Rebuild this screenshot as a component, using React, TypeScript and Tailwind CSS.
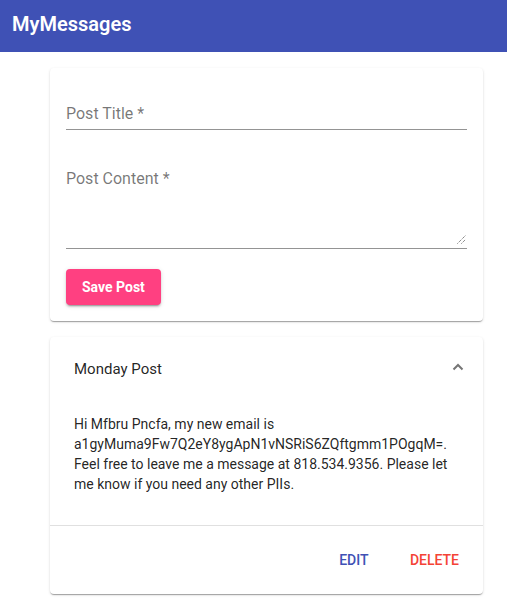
import React from "react";

export default function App() {
  const shadow =
    "shadow-[0_2px_1px_-1px_rgba(0,0,0,0.2),0_1px_1px_0_rgba(0,0,0,0.14),0_1px_3px_0_rgba(0,0,0,0.12)]";
  return (
    <div className="min-h-[602px] bg-white font-['Roboto',sans-serif]">
      <header className="h-[52px] bg-[#3f51b5] flex items-center px-[12px]">
        <span className="text-white text-[20px] font-semibold leading-[24px] mt-[-4px]">MyMessages</span>
      </header>

      <main className="pt-[16px] pb-[8px]">
        <div className={`ml-[50px] w-[433px] bg-white rounded-[4px] ${shadow} px-[16px] pt-[16px] pb-[16px]`}>
          <div className="pt-[21px] pb-[6px] border-b border-[#949494]">
            <div className="text-[16px] leading-[18px] text-[rgba(0,0,0,0.54)]">Post Title *</div>
          </div>
          <div className="mt-[20px] pt-[20px] pb-[60px] border-b border-[#949494] relative">
            <div className="text-[16px] leading-[18px] text-[rgba(0,0,0,0.54)]">Post Content *</div>
            <svg className="absolute right-[1px] bottom-[4px]" width="9" height="9" viewBox="0 0 9 9">
              <line x1="0.5" y1="8.5" x2="8.5" y2="0.5" stroke="#555" strokeWidth="1" strokeDasharray="1 1" />
              <line x1="4.5" y1="8.5" x2="8.5" y2="4.5" stroke="#555" strokeWidth="1" strokeDasharray="1 1" />
            </svg>
          </div>
          <button className="mt-[20px] h-[36px] px-[16px] rounded-[4px] bg-[#ff4081] text-white text-[14px] font-bold shadow-[0_3px_1px_-2px_rgba(0,0,0,0.2),0_2px_2px_0_rgba(0,0,0,0.14),0_1px_5px_0_rgba(0,0,0,0.12)]">
            Save Post
          </button>
        </div>

        <div className={`mt-[16px] ml-[50px] w-[433px] bg-white rounded-[4px] ${shadow}`}>
          <div className="h-[64px] px-[24px] flex items-center justify-between">
            <span className="text-[15px] text-[rgba(0,0,0,0.87)]">Monday Post</span>
            <svg width="12" height="8" viewBox="0 0 12 8" className="mr-[-5px] mt-[-5px]">
              <polyline points="1.5,6.5 6,2 10.5,6.5" fill="none" stroke="rgba(0,0,0,0.54)" strokeWidth="2" />
            </svg>
          </div>
          <div className="px-[24px] pt-[13px] pb-[31px]">
            <p className="text-[14px] leading-[20px] text-[rgba(0,0,0,0.87)]">
              Hi Mfbru Pncfa, my new email is a1gyMuma9Fw7Q2eY8ygApN1vNSRiS6ZQftgmm1POgqM=. Feel free to leave me a message at 818.534.9356. Please let me know if you need any other PIIs.
            </p>
          </div>
          <div className="border-t border-[rgba(0,0,0,0.12)] flex justify-end gap-[8px] pr-[8px] py-[16px]">
            <button className="h-[36px] min-w-[64px] px-[16px] text-[14px] font-medium text-[#3f51b5] uppercase">Edit</button>
            <button className="h-[36px] min-w-[64px] px-[16px] text-[14px] font-medium text-[#f44336] uppercase">Delete</button>
          </div>
        </div>
      </main>
    </div>
  );
}
